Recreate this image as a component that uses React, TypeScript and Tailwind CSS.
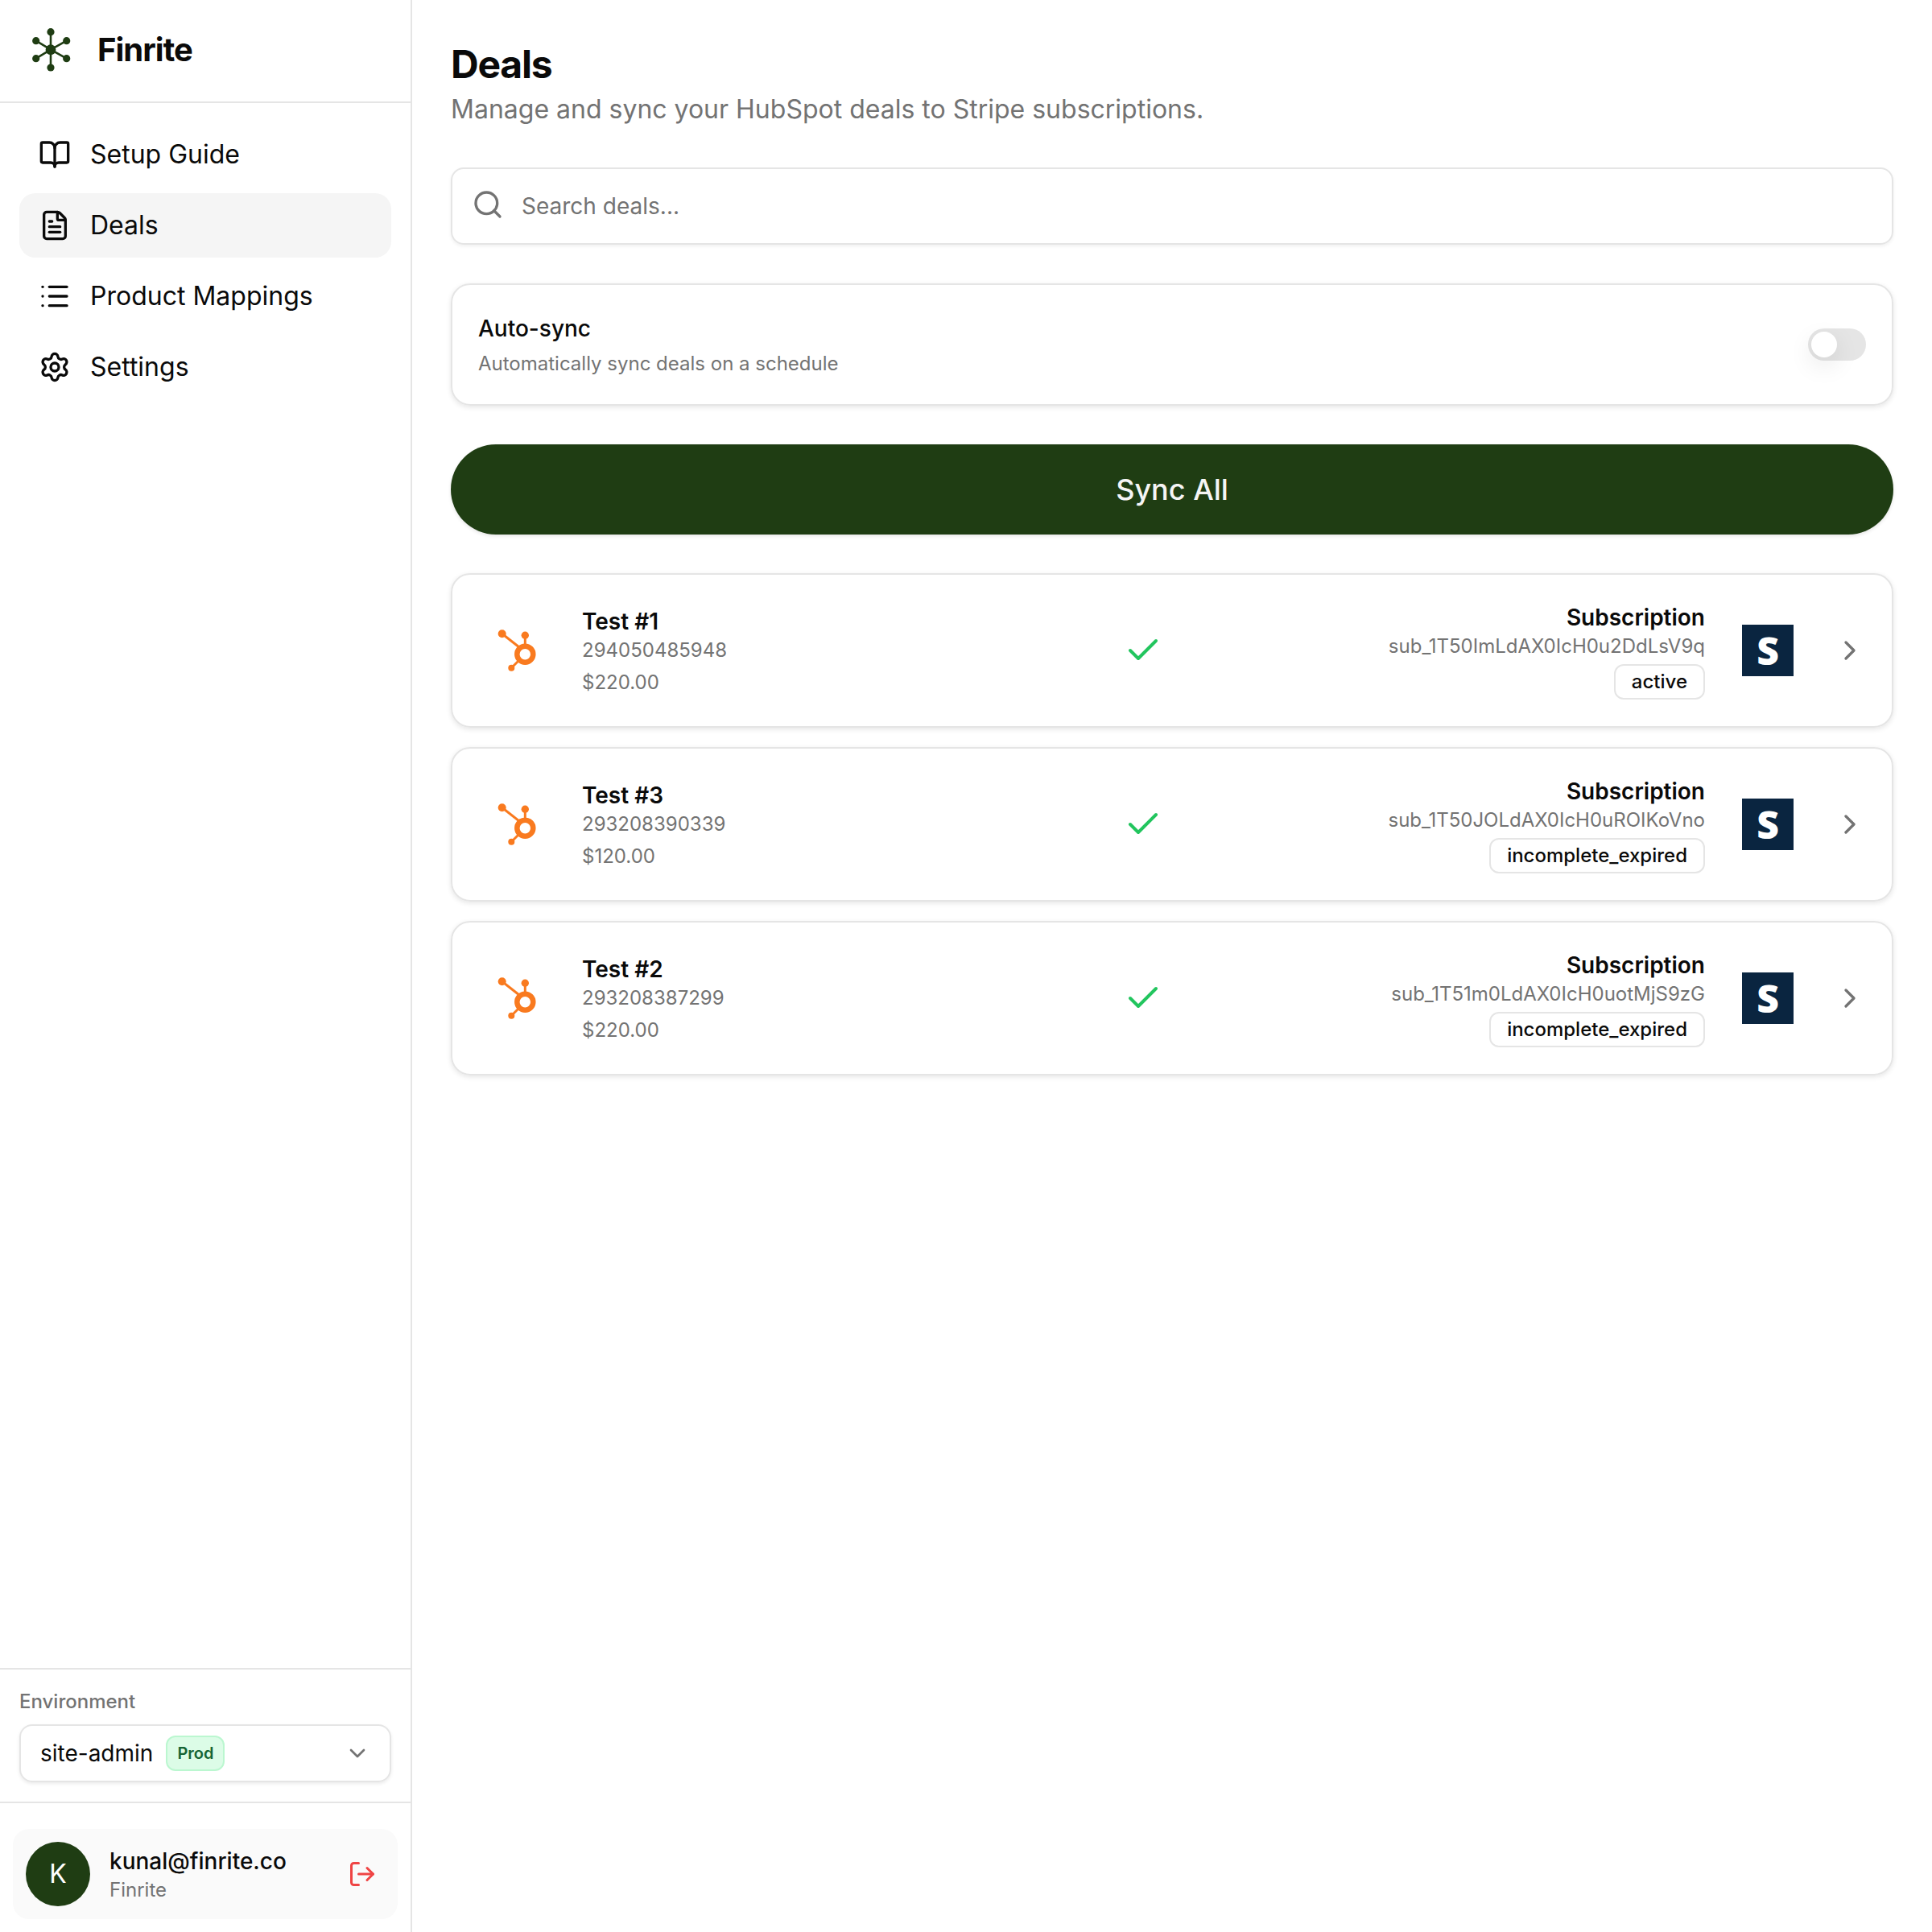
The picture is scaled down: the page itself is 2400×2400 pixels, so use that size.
import { BookOpen, FileText, List, Settings, Search, Check, ChevronRight, ChevronDown, LogOut } from "lucide-react";

function Logo() {
  const nodes = [[33, 10.7], [33, 55], [14.7, 21.7], [52.7, 21.7], [14.7, 43.7], [52.7, 43.7]];
  return (
    <svg width="66" height="66" viewBox="0 0 66 66" className="shrink-0" fill="#1f3d13" stroke="#1f3d13">
      {nodes.map(([x, y], i) => (
        <g key={i}>
          <line x1="33" y1="32.7" x2={x} y2={y} strokeWidth="2.6" />
          <circle cx={x} cy={y} r="4.6" stroke="none" />
        </g>
      ))}
      <circle cx="33" cy="32.7" r="6.4" stroke="none" />
    </svg>
  );
}

function HubSpot() {
  return (
    <svg width="56" height="60" viewBox="0 0 56 60" className="shrink-0" fill="#f97a1f" stroke="#f97a1f">
      <circle cx="36.3" cy="34.7" r="10" fill="none" strokeWidth="6.5" />
      <line x1="36.3" y1="11" x2="36.3" y2="24" strokeWidth="3" />
      <line x1="7.7" y1="9.3" x2="29" y2="26" strokeWidth="3" />
      <line x1="19.3" y1="51.7" x2="29" y2="42" strokeWidth="3" />
      <circle cx="36.3" cy="11.3" r="4.7" stroke="none" />
      <circle cx="7.7" cy="9.3" r="5" stroke="none" />
      <circle cx="19.3" cy="51.7" r="4" stroke="none" />
    </svg>
  );
}

const nav = [
  { label: "Setup Guide", Icon: BookOpen, active: false },
  { label: "Deals", Icon: FileText, active: true },
  { label: "Product Mappings", Icon: List, active: false },
  { label: "Settings", Icon: Settings, active: false },
];

const deals = [
  { name: "Test #1", id: "294050485948", amount: "$220.00", sub: "sub_1T50ImLdAX0IcH0u2DdLsV9q", status: "active" },
  { name: "Test #3", id: "293208390339", amount: "$120.00", sub: "sub_1T50JOLdAX0IcH0uROIKoVno", status: "incomplete_expired" },
  { name: "Test #2", id: "293208387299", amount: "$220.00", sub: "sub_1T51m0LdAX0IcH0uotMjS9zG", status: "incomplete_expired" },
];

export default function App() {
  return (
    <div className="flex h-[2400px] w-[2400px] bg-white text-[#0a0a0a] font-['Inter',sans-serif]">
      <aside className="flex w-[512px] shrink-0 flex-col border-r-2 border-[#e5e5e5]">
        <div className="flex h-[128px] shrink-0 items-center gap-[25px] border-b-2 border-[#e5e5e5] pl-[30px] pb-[2px]">
          <Logo />
          <span className="text-[40px] font-bold leading-none tracking-[-1px]">Finrite</span>
        </div>
        <nav className="flex flex-1 flex-col gap-2 px-6 pt-6">
          {nav.map(({ label, Icon, active }) => (
            <div key={label} className={`flex h-20 items-center gap-6 rounded-[20px] pl-6 text-[32px] ${active ? "bg-[#f5f5f5]" : ""}`}>
              <Icon size={40} strokeWidth={2} className="shrink-0" />
              <span>{label}</span>
            </div>
          ))}
        </nav>
        <div className="border-t-2 border-[#e5e5e5] px-6 py-6">
          <div className="mb-3 text-[24px] leading-8 font-medium text-[#737373]">Environment</div>
          <div className="flex h-[72px] items-center rounded-2xl border-2 border-[#e5e5e5] pl-6 pr-[24px] shadow-[0_2px_4px_rgba(0,0,0,0.08)]">
            <span className="text-[28px]">site-admin</span>
            <span className="ml-4 flex h-[44px] items-center rounded-xl border-2 border-[#bbf7d0] bg-[#dcfce7] px-[12px] text-[20px] font-semibold text-[#166534]">Prod</span>
            <ChevronDown size={32} className="ml-auto text-[#737373]" />
          </div>
        </div>
        <div className="border-t-2 border-[#e5e5e5] px-4 pt-8 pb-4">
          <div className="flex h-[112px] items-center rounded-[20px] bg-[#fafafa] px-4">
            <div className="flex h-20 w-20 shrink-0 items-center justify-center rounded-full bg-[#1f3d13] text-[32px] text-white">K</div>
            <div className="ml-6 flex flex-col">
              <span className="text-[28px] leading-10 font-medium">kunal@finrite.co</span>
              <span className="text-[24px] leading-8 text-[#737373]">Finrite</span>
            </div>
            <LogOut size={36} className="ml-auto mr-[10px] text-[#ef4444]" />
          </div>
        </div>
      </aside>
      <main className="flex flex-1 flex-col px-12 pt-12">
        <h1 className="text-[48px] leading-[64px] font-bold tracking-[-1.2px]">Deals</h1>
        <p className="text-[32px] leading-[48px] text-[#737373]">Manage and sync your HubSpot deals to Stripe subscriptions.</p>
        <div className="mt-12 flex h-24 items-center gap-[22px] rounded-2xl border-2 border-[#e5e5e5] pl-[24px] shadow-[0_2px_4px_rgba(0,0,0,0.06)]">
          <Search size={40} className="-mt-1 text-[#737373]" />
          <span className="text-[28px] text-[#737373]">Search deals...</span>
        </div>
        <div className="mt-12 flex h-[152px] items-center justify-between rounded-[24px] border-2 border-[#e5e5e5] pl-8 pr-8 shadow-[0_2px_6px_rgba(0,0,0,0.1)]">
          <div className="flex flex-col gap-2">
            <span className="text-[28px] leading-10 font-medium">Auto-sync</span>
            <span className="text-[24px] leading-8 text-[#737373]">Automatically sync deals on a schedule</span>
          </div>
          <div className="flex h-10 w-[72px] items-center rounded-full bg-[#e5e5e5] pl-1">
            <div className="h-8 w-8 rounded-full bg-white shadow-[0_10px_30px_rgba(0,0,0,0.1)]" />
          </div>
        </div>
        <button className="mt-12 h-28 rounded-full bg-[#1f3d13] text-[36px] font-medium text-[#f5f5f5] shadow-[0_2px_4px_rgba(0,0,0,0.1)]">Sync All</button>
        <div className="mt-12 flex flex-col gap-6">
          {deals.map((d) => (
            <div key={d.name} className="flex h-[192px] items-center rounded-[24px] border-2 border-[#e5e5e5] pl-[54px] shadow-[0_2px_6px_rgba(0,0,0,0.1)]">
              <div className="flex w-[780px] shrink-0 items-center gap-[51px]">
                <HubSpot />
                <div className="flex flex-col">
                  <span className="text-[28px] leading-10 font-semibold">{d.name}</span>
                  <span className="text-[24px] leading-8 text-[#737373]">{d.id}</span>
                  <span className="mt-2 text-[24px] leading-8 text-[#737373]">{d.amount}</span>
                </div>
              </div>
              <Check size={48} strokeWidth={2} className="shrink-0 text-[#22c55e]" />
              <div className="flex flex-1 flex-col items-end">
                <span className="text-[28px] leading-10 font-semibold">Subscription</span>
                <span className="text-[24px] leading-8 text-[#737373]">{d.sub}</span>
                <span className="mt-[6px] rounded-xl border-2 border-[#e5e5e5] px-5 text-[24px] leading-[40px] font-medium">{d.status}</span>
              </div>
              <div className="ml-[46px] flex h-16 w-16 shrink-0 items-center justify-center bg-[#0a2540] font-['Open_Sans',sans-serif] text-[48px] font-extrabold text-white">S</div>
              <ChevronRight size={40} className="ml-[50px] mr-[32px] shrink-0 text-[#737373]" />
            </div>
          ))}
        </div>
      </main>
    </div>
  );
}
